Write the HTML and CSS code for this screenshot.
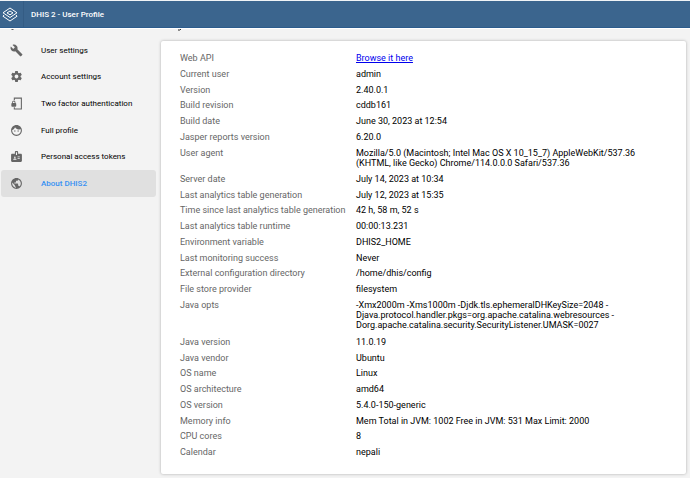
FILE: index.html
```html
<!DOCTYPE html>
<html lang="en">
<head>
  <meta charset="UTF-8">
  <title>DHIS 2 - User Profile</title>
  <meta name="viewport" content="width=device-width,initial-scale=1.0">
  <link rel="stylesheet" href="styles.css">
</head>
<body>
  <header class="header-bar">
    <a class="header-logo" href="#" aria-label="Home">
      <svg viewBox="0 0 32 30" fill="none" stroke="#fff" stroke-width="2" stroke-linejoin="round">
        <path d="M16 2L30 11.500L16 21L2 11.500Z"/>
        <path d="M16 8L22 11.800L16 15.600L10 11.800Z"/>
        <path d="M4 16L2 18.500L16 28L30 18.500L28 16"/>
      </svg>
    </a>
    <div class="header-title">DHIS 2 - User Profile</div>
  </header>
  <div class="page">
    <nav class="sidebar">
      <svg class="scrolled-icon" viewBox="0 0 6 2"><path d="M1 0h3L3 1H2z" fill="#666"/></svg>
      <div class="menu">
        <a class="menu-item" href="#">
          <svg viewBox="0 0 24 24"><path d="M22.700 19l-9.100-9.100c.9-2.300.4-5-1.500-6.900-2-2-5-2.400-7.400-1.300L9 6 6 9 1.600 4.700C.4 7.100.9 10.100 2.900 12.100c1.900 1.900 4.600 2.400 6.900 1.500l9.100 9.100c.4.4 1 .4 1.400 0l2.300-2.300c.5-.4.5-1.100.1-1.400z"/></svg>
          User settings
        </a>
        <a class="menu-item" href="#">
          <svg viewBox="0 0 24 24"><path d="M19.430 12.980c.04-.32.07-.64.07-.98s-.03-.66-.07-.98l2.110-1.650c.19-.15.24-.42.12-.64l-2-3.460c-.12-.22-.39-.3-.61-.22l-2.490 1c-.52-.4-1.080-.73-1.690-.98l-.38-2.650C14.460 2.180 14.250 2 14 2h-4c-.25 0-.46.18-.49.42l-.38 2.650c-.61.25-1.170.59-1.690.98l-2.490-1c-.23-.09-.49 0-.61.22l-2 3.460c-.13.22-.07.49.12.64l2.110 1.650c-.04.32-.07.65-.07.98s.03.66.07.98l-2.110 1.650c-.19.15-.24.42-.12.64l2 3.460c.12.22.39.3.61.22l2.490-1c.52.4 1.080.73 1.690.98l.38 2.650c.03.24.24.42.49.42h4c.25 0 .46-.18.49-.42l.38-2.650c.61-.25 1.170-.59 1.690-.98l2.490 1c.23.09.49 0 .61-.22l2-3.460c.12-.22.07-.49-.12-.64l-2.110-1.650zM12 15.500c-1.930 0-3.500-1.570-3.500-3.500s1.570-3.500 3.500-3.500 3.500 1.570 3.500 3.500-1.570 3.500-3.500 3.500z"/></svg>
          Account settings
        </a>
        <a class="menu-item" href="#">
          <svg viewBox="0 0 24 24">
            <path d="M8 6V2h13v20H8v-3" fill="none" stroke="#666" stroke-width="2"/>
            <path d="M10 11V9.500C10 8 8.600 7 7 7S4 8 4 9.500V11c-.8 0-1.500.6-1.500 1.400v4.200c0 .8.7 1.400 1.500 1.400h6c.8 0 1.500-.6 1.500-1.400v-4.200c0-.8-.7-1.400-1.500-1.400zm-1.500 0h-3V9.500c0-.7.7-1.200 1.500-1.200s1.500.5 1.500 1.200z"/>
          </svg>
          Two factor authentication
        </a>
        <a class="menu-item" href="#">
          <svg viewBox="0 0 24 24"><path d="M9 11.750c-.69 0-1.250.56-1.250 1.250s.56 1.250 1.250 1.250 1.250-.56 1.250-1.250-.56-1.250-1.250-1.250zm6 0c-.69 0-1.250.56-1.250 1.250s.56 1.250 1.250 1.250 1.250-.56 1.250-1.250-.56-1.250-1.250-1.250zM12 2C6.480 2 2 6.480 2 12s4.480 10 10 10 10-4.480 10-10S17.520 2 12 2zm0 18c-4.410 0-8-3.590-8-8 0-.29.02-.58.05-.86 2.360-1.050 4.230-2.980 5.210-5.370C11.070 8.330 14.050 10 17.420 10c.78 0 1.530-.09 2.250-.26.21.71.33 1.470.33 2.260 0 4.410-3.590 8-8 8z"/></svg>
          Full profile
        </a>
        <a class="menu-item" href="#">
          <svg viewBox="0 0 24 24"><path d="M20 7h-5V4c0-1.100-.9-2-2-2h-2c-1.100 0-2 .9-2 2v3H4c-1.100 0-2 .9-2 2v11c0 1.100.9 2 2 2h16c1.100 0 2-.9 2-2V9c0-1.100-.9-2-2-2zM9 12c.83 0 1.500.67 1.500 1.500S9.830 15 9 15s-1.500-.67-1.500-1.500S8.170 12 9 12zm3 6H6v-.43c0-.6.36-1.150.92-1.390.65-.28 1.350-.43 2.080-.43s1.430.15 2.080.43c.55.24.92.78.92 1.390V18zm1-9h-2V4h2v5zm5 7.500h-4V15h4v1.500zm0-3h-4V12h4v1.500z"/></svg>
          Personal access tokens
        </a>
        <a class="menu-item active" href="#">
          <svg viewBox="0 0 24 24"><path d="M12 2C6.480 2 2 6.480 2 12s4.480 10 10 10 10-4.480 10-10S17.520 2 12 2zm-1 17.930c-3.950-.49-7-3.850-7-7.930 0-.62.08-1.210.21-1.790L9 15v1c0 1.100.9 2 2 2v1.930zm6.900-2.540c-.26-.81-1-1.390-1.900-1.390h-1v-3c0-.55-.45-1-1-1H8v-2h2c.55 0 1-.45 1-1V7h2c1.100 0 2-.9 2-2v-.41c2.930 1.190 5 4.060 5 7.410 0 2.080-.8 3.970-2.100 5.390z"/></svg>
          About DHIS2
        </a>
      </div>
    </nav>
    <main class="content">
      <!-- descender of the heading that has scrolled under the header -->
      <svg class="scrolled-heading" viewBox="0 0 4 2"><path d="M3 0Q2 1.500 0 1" fill="none" stroke="#222"/></svg>
      <div class="card">
        <table class="info">
          <tr><th scope="row">Web API</th><td><a href="#">Browse it here</a></td></tr>
          <tr><th scope="row">Current user</th><td>admin</td></tr>
          <tr><th scope="row">Version</th><td>2.40.0.1</td></tr>
          <tr><th scope="row">Build revision</th><td>cddb161</td></tr>
          <tr><th scope="row">Build date</th><td>June 30, 2023 at 12:54</td></tr>
          <tr><th scope="row">Jasper reports version</th><td>6.20.0</td></tr>
          <tr><th scope="row">User agent</th><td>Mozilla/5.0 (Macintosh; Intel Mac OS X 10_15_7) AppleWebKit/537.36 (KHTML, like Gecko) Chrome/114.0.0.0 Safari/537.36</td></tr>
          <tr><th scope="row">Server date</th><td>July 14, 2023 at 10:34</td></tr>
          <tr><th scope="row">Last analytics table generation</th><td>July 12, 2023 at 15:35</td></tr>
          <tr><th scope="row">Time since last analytics table generation</th><td>42 h, 58 m, 52 s</td></tr>
          <tr><th scope="row">Last analytics table runtime</th><td>00:00:13.231</td></tr>
          <tr><th scope="row">Environment variable</th><td>DHIS2_HOME</td></tr>
          <tr><th scope="row">Last monitoring success</th><td>Never</td></tr>
          <tr><th scope="row">External configuration directory</th><td>/home/dhis/config</td></tr>
          <tr><th scope="row">File store provider</th><td>filesystem</td></tr>
          <tr><th scope="row">Java opts</th><td>-Xmx2000m -Xms1000m -Djdk.tls.ephemeralDHKeySize=2048 -Djava.protocol.handler.pkgs=org.apache.catalina.webresources -Dorg.apache.catalina.security.SecurityListener.UMASK=0027</td></tr>
          <tr><th scope="row">Java version</th><td>11.0.19</td></tr>
          <tr><th scope="row">Java vendor</th><td>Ubuntu</td></tr>
          <tr><th scope="row">OS name</th><td>Linux</td></tr>
          <tr><th scope="row">OS architecture</th><td>amd64</td></tr>
          <tr><th scope="row">OS version</th><td>5.4.0-150-generic</td></tr>
          <tr><th scope="row">Memory info</th><td>Mem Total in JVM: 1002 Free in JVM: 531 Max Limit: 2000</td></tr>
          <tr><th scope="row">CPU cores</th><td>8</td></tr>
          <tr><th scope="row">Calendar</th><td>nepali</td></tr>
        </table>
      </div>
    </main>
  </div>
</body>
</html>
```
FILE: styles.css
```css
* {box-sizing:border-box;}
body {margin:0; min-height:100vh; display:flex; flex-direction:column; font-family:Roboto,sans-serif; font-size:9px; background:#f3f3f3; color:#000;}

.header-bar {display:flex; height:28px; border-top:1px solid #f0f4f7; border-bottom:1px solid #2c5c8d; background:#3b658e; color:#fff;}
.header-logo {display:flex; align-items:center; justify-content:center; width:24px; padding-right:3px; border-right:1px solid #345c84;}
.header-logo svg {flex:none; width:16px; height:15px;}
.header-title {display:flex; align-items:center; padding-left:7px; font-size:8px; font-weight:500;}

.page {flex:1; display:flex; border-top:1px solid #fff;}
.sidebar {width:158px; padding:0 2px 0 1px; display:flex; flex-direction:column;}
.scrolled-icon {width:6px; height:2px; margin-left:9px; margin-bottom:6px;}
.menu {display:grid; grid-auto-rows:1fr; height:160px;}
.menu-item {display:flex; align-items:center; gap:18px; padding-left:9px; border-radius:3px; color:#000; font-size:8px; text-decoration:none;}
.menu-item svg {width:13px; height:13px; fill:#666;}
.menu-item.active {background:#e0e0e0; color:#3590f3; font-weight:500;}

.content {flex:1; display:flex; flex-direction:column; padding:0 4px 4px 3px;}
.scrolled-heading {width:4px; height:2px; margin-left:17px; margin-bottom:10px;}
.card {flex:1; display:grid; padding:9px 19px 14px; background:#fff; border-radius:2px; box-shadow:0 0 3px rgba(0,0,0,0.3);}

/* rows share whatever height the card has left over */
.info {width:100%; border-collapse:collapse; line-height:10px;}
.info th {width:176px; padding:3px 0 2px; color:#666; font-weight:400; text-align:left; vertical-align:top;}
.info td {padding:3px 0 2px; vertical-align:top;}
.info a {color:#00e;}
```
